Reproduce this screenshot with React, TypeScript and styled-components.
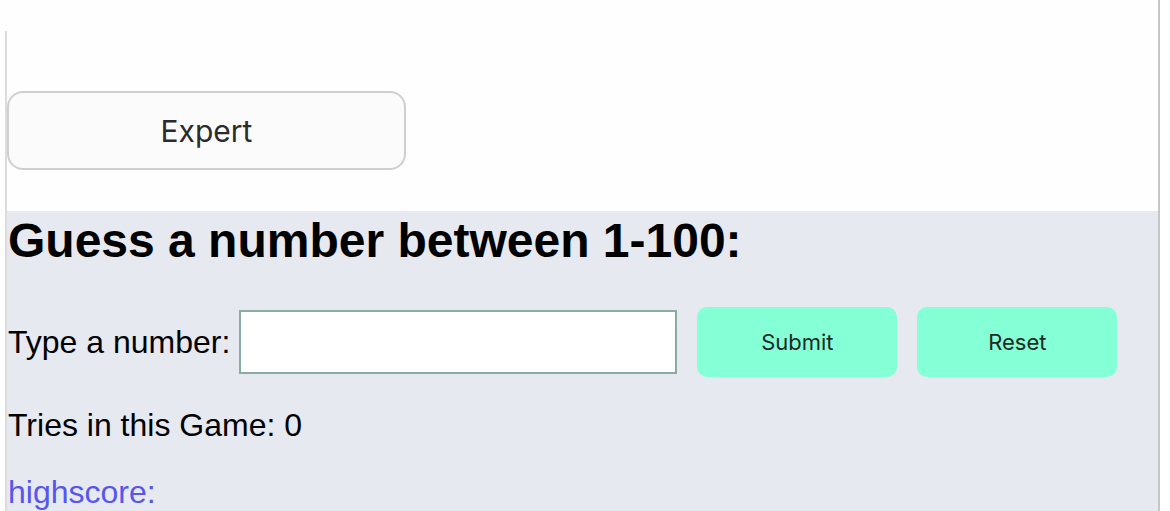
import React from "react";
import styled, { createGlobalStyle } from "styled-components";

const Global = createGlobalStyle`
  html, body { margin: 0; padding: 0; background: #ffffff; }
  body { font-family: "Liberation Sans", Arial, sans-serif; }
`;

const Page = styled.div`
  width: 1160px;
  height: 511px;
  border-right: 2px solid #c6c6c8;
  padding-top: 31px;
  box-sizing: border-box;
  overflow: hidden;
  background: #fefefe;
`;

const Frame = styled.div`
  margin-left: 5px;
  border-left: 2px solid #dcdcdc;
  height: 100%;
  display: flex;
  flex-direction: column;
`;

const TopBar = styled.div`
  flex-shrink: 0;
  height: 180px;
  padding-top: 60px;
  box-sizing: border-box;
`;

const LevelButton = styled.button`
  width: 399px;
  height: 79px;
  box-sizing: border-box;
  border: 2px solid #cfcfcf;
  border-radius: 16px;
  background: #fbfbfb;
  color: #2b2b2b;
  font-family: Inter, "Noto Sans", sans-serif;
  font-size: 30px;
  padding: 0;
`;

const Game = styled.section`
  flex: 1 0 auto;
  background: #e7e9f1;
  padding-left: 1px;
`;

const Title = styled.h2`
  margin: 2px 0 0;
  font-size: 48px;
  font-weight: bold;
  color: #000;
  line-height: 55px;
`;

const Row = styled.div`
  display: flex;
  align-items: center;
  margin-top: 39px;
  height: 70px;
`;

const Label = styled.label`
  font-size: 32px;
  line-height: 37px;
  color: #000;
  margin-right: 9px;
`;

const NumberInput = styled.input`
  width: 438px;
  height: 64px;
  box-sizing: border-box;
  border: 2px solid #8aab9f;
  background: #fff;
  margin-right: 20px;
`;

const ActionButton = styled.button`
  width: 200px;
  height: 70px;
  border: none;
  border-radius: 10px;
  background: #84ffd6;
  color: #1f2a25;
  font-family: Inter, "Noto Sans", sans-serif;
  font-size: 22px;
  margin-right: 20px;
  padding: 0;
`;

const Info = styled.p<{ $color?: string }>`
  margin: 30px 0 0;
  font-size: 32px;
  line-height: 37px;
  color: ${(p) => p.$color || "#000"};
`;

export default function App() {
  return (
    <>
      <Global />
      <Page>
        <Frame>
          <TopBar>
            <LevelButton>Expert</LevelButton>
          </TopBar>
          <Game>
            <Title>Guess a number between 1-100:</Title>
            <Row>
              <Label htmlFor="guess">Type a number:</Label>
              <NumberInput id="guess" type="text" />
              <ActionButton>Submit</ActionButton>
              <ActionButton>Reset</ActionButton>
            </Row>
            <Info>Tries in this Game: 0</Info>
            <Info $color="#5656ef">highscore:</Info>
          </Game>
        </Frame>
      </Page>
    </>
  );
}
